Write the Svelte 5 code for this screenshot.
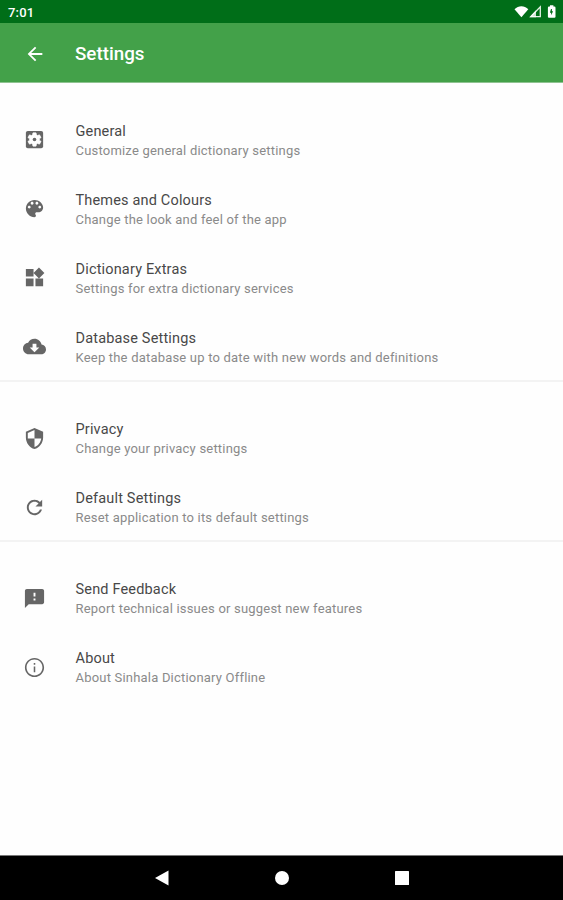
<script>
  const icons = {
    general: 'M5 3h14q2 0 2 2v14q0 2-2 2H5q-2 0-2-2V5q0-2 2-2z',
    palette: 'M12 3c-4.97 0-9 4.03-9 9s4.03 9 9 9c.83 0 1.5-.67 1.5-1.5 0-.39-.15-.74-.39-1.01-.23-.26-.38-.61-.38-.99 0-.83.67-1.5 1.5-1.5H16c2.76 0 5-2.24 5-5 0-4.42-4.03-8-9-8zm-5.5 9c-.83 0-1.5-.67-1.5-1.5S5.67 9 6.5 9 8 9.67 8 10.5 7.33 12 6.5 12zm3-4C8.67 8 8 7.33 8 6.5S8.67 5 9.5 5s1.5.67 1.5 1.5S10.33 8 9.5 8zm5 0c-.83 0-1.5-.67-1.5-1.5S13.67 5 14.5 5s1.5.67 1.5 1.5S15.33 8 14.5 8zm3 4c-.83 0-1.5-.67-1.5-1.5S16.67 9 17.5 9s1.5.67 1.5 1.5-.67 1.5-1.5 1.5z',
    widgets: 'M13 13v8h8v-8h-8zM3 21h8v-8H3v8zM3 3v8h8V3H3zm13.66-1.31L11 7.34 16.66 13l5.66-5.66-5.66-5.65z',
    cloud: 'M19.35 10.04C18.67 6.59 15.64 4 12 4 9.11 4 6.6 5.64 5.35 8.04 2.34 8.36 0 10.91 0 14c0 3.31 2.69 6 6 6h13c2.76 0 5-2.24 5-5 0-2.64-2.05-4.78-4.65-4.96zM17 13l-5 5-5-5h3V9h4v4h3z',
    shield: 'M12 1L3 5v6c0 5.55 3.84 10.74 9 12 5.16-1.26 9-6.45 9-12V5l-9-4zm0 10.99h7c-.53 4.12-3.28 7.79-7 8.94V12H5V6.3l7-3.11v8.8z',
    refresh: 'M17.65 6.35C16.2 4.9 14.21 4 12 4c-4.42 0-7.99 3.58-7.99 8s3.57 8 7.99 8c3.73 0 6.84-2.55 7.73-6h-2.08c-.82 2.33-3.04 4-5.65 4-3.31 0-6-2.69-6-6s2.69-6 6-6c1.66 0 3.14.69 4.22 1.78L13 11h7V4l-2.35 2.35z',
    feedback: 'M20 2H4c-1.1 0-1.99.9-1.99 2L2 22l4-4h14c1.1 0 2-.9 2-2V4c0-1.1-.9-2-2-2zm-7 12h-2v-2h2v2zm0-4h-2V6h2v4z',
    info: 'M11.200 17h1.600v-6h-1.600v6zm.8-15C6.48 2 2 6.48 2 12s4.48 10 10 10 10-4.48 10-10S17.52 2 12 2zm0 18.300c-4.600 0-8.300-3.700-8.300-8.300s3.700-8.300 8.300-8.300 8.300 3.700 8.300 8.300-3.700 8.300-8.300 8.300zM11.200 9h1.600V7.200h-1.600V9z'
  };
  const gear = 'M17.25 12c0 .23-.02.46-.05.68l1.48 1.16c.13.11.17.3.08.45l-1.4 2.42c-.09.15-.27.21-.43.15l-1.74-.7c-.36.28-.76.51-1.18.69l-.26 1.85c-.03.17-.18.3-.35.3h-2.8c-.17 0-.32-.13-.35-.29l-.26-1.85c-.43-.18-.82-.41-1.18-.69l-1.74.7c-.16.06-.34 0-.43-.15l-1.4-2.42c-.09-.15-.05-.34.08-.45l1.48-1.16c-.03-.23-.05-.46-.05-.69 0-.23.02-.46.05-.68l-1.48-1.16c-.13-.11-.17-.3-.08-.45l1.4-2.42c.09-.15.27-.21.43-.15l1.74.7c.36-.28.76-.51 1.18-.69l.26-1.85c.03-.17.18-.3.35-.3h2.8c.17 0 .32.13.35.29l.26 1.85c.43.18.82.41 1.18.69l1.74-.7c.16-.06.34 0 .43.15l1.4 2.42c.09.15.05.34-.08.45l-1.48 1.16c.03.23.05.46.05.69z';

  const groups = [
    [
      { icon: 'general', title: 'General', text: 'Customize general dictionary settings' },
      { icon: 'palette', title: 'Themes and Colours', text: 'Change the look and feel of the app' },
      { icon: 'widgets', title: 'Dictionary Extras', text: 'Settings for extra dictionary services' },
      { icon: 'cloud', title: 'Database Settings', text: 'Keep the database up to date with new words and definitions' }
    ],
    [
      { icon: 'shield', title: 'Privacy', text: 'Change your privacy settings' },
      { icon: 'refresh', title: 'Default Settings', text: 'Reset application to its default settings' }
    ],
    [
      { icon: 'feedback', title: 'Send Feedback', text: 'Report technical issues or suggest new features' },
      { icon: 'info', title: 'About', text: 'About Sinhala Dictionary Offline' }
    ]
  ];
</script>

<div class="screen">
  <div class="status">
    <span>7:01</span>
    <svg width="44" height="14" viewBox="0 0 44 14" fill="#fff">
      <path d="M1.500 4.200C5.500.2 11.300.2 15.300 4.200L8.400 12.300z" />
      <path d="M27.300 1.800V11.700H17.800z" fill="none" stroke="#e4f1e5" stroke-width="1.300" />
      <path d="M16.500 12.300L23 5.300V12.300z" opacity=".8" />
      <path fill-rule="evenodd" d="M37 .3h3.400v1.300h1q1.100 0 1.100 1.100v9q0 1.100-1.100 1.100h-5.400q-1.100 0-1.100-1.100v-9q0-1.100 1.100-1.100h1zM38 4l-1.100 3.800h1.200v2.500l2-4h-1.200V4z" />
    </svg>
  </div>
  <header>
    <svg class="back" width="22" height="22" viewBox="0 0 24 24" fill="#fff">
      <path d="M20 11H7.830l5.590-5.590L12 4l-8 8 8 8 1.410-1.410L7.830 13H20v-2z" />
    </svg>
    <h1>Settings</h1>
  </header>
  <main>
    {#each groups as group}
      <section>
        {#each group as item}
          <div class="row">
            <svg width="23" height="23" viewBox="0 0 24 24">
              <path d={icons[item.icon]} />
              {#if item.icon === 'general'}
                <path class="gear" d={gear} />
                <circle cx="12" cy="12" r="1.900" />
              {/if}
            </svg>
            <div class="label">
              <div class="title">{item.title}</div>
              <div class="text">{item.text}</div>
            </div>
          </div>
        {/each}
      </section>
    {/each}
  </main>
  <nav>
    <svg width="16" height="18" viewBox="0 0 16 18"><path d="M1 9L14.500 1.500v15z" /></svg>
    <svg width="16" height="18" viewBox="0 0 16 18"><circle cx="8" cy="9" r="7" /></svg>
    <svg width="16" height="18" viewBox="0 0 16 18"><rect x="1" y="2" width="14" height="14" rx=".5" /></svg>
  </nav>
</div>

<style>
  :global(body) { margin: 0; }
  .screen {
    width: 563px;
    height: 900px;
    display: flex;
    flex-direction: column;
    background: #fefefe;
    font-family: Roboto, sans-serif;
    overflow: hidden;
  }
  .status {
    height: 23px;
    box-sizing: border-box;
    padding: 1px 6px 0 8px;
    display: flex;
    align-items: center;
    justify-content: space-between;
    background: #006e18;
    color: #fff;
    font-size: 13px;
    font-weight: 500;
    letter-spacing: .2px;
  }
  .status svg { margin-top: -1px; }
  header {
    height: 60px;
    box-sizing: border-box;
    border-bottom: 1px solid #8fc391;
    padding-left: 24px;
    display: flex;
    align-items: center;
    gap: 29px;
    background: #43a149;
    color: #fff;
  }
  h1 {
    margin: 2px 0 0;
    font-size: 18.800px;
    font-weight: 500;
    line-height: 24px;
  }
  .back { margin-top: 2px; }
  main { flex: 1; }
  section {
    padding-top: 21.500px;
    border-bottom: 2px solid #f3f3f3;
  }
  section:first-child { padding-top: 22px; }
  section:last-child { border-bottom: 0; }
  .row {
    height: 69px;
    display: flex;
    align-items: center;
    gap: 30px;
    padding-left: 22.500px;
  }
  .row:last-child { margin-bottom: -1px; }
  section:nth-child(2) .row:last-child { margin-bottom: -1.500px; }
  .row svg { fill: #666; flex: none; }
  .row .gear { fill: #fefefe; stroke: #fefefe; stroke-width: .6; }
  .label { white-space: nowrap; padding-top: 2px; }
  .title {
    font-size: 14.500px;
    line-height: 20px;
    letter-spacing: .17px;
    color: #484848;
  }
  .text {
    font-size: 13px;
    line-height: 18px;
    letter-spacing: .2px;
    color: #8a8a8a;
  }
  nav {
    height: 45px;
    box-sizing: border-box;
    border-top: 1px solid #777;
    display: flex;
    justify-content: center;
    align-items: center;
    gap: 104px;
    background: #000;
    fill: #fff;
  }
</style>
